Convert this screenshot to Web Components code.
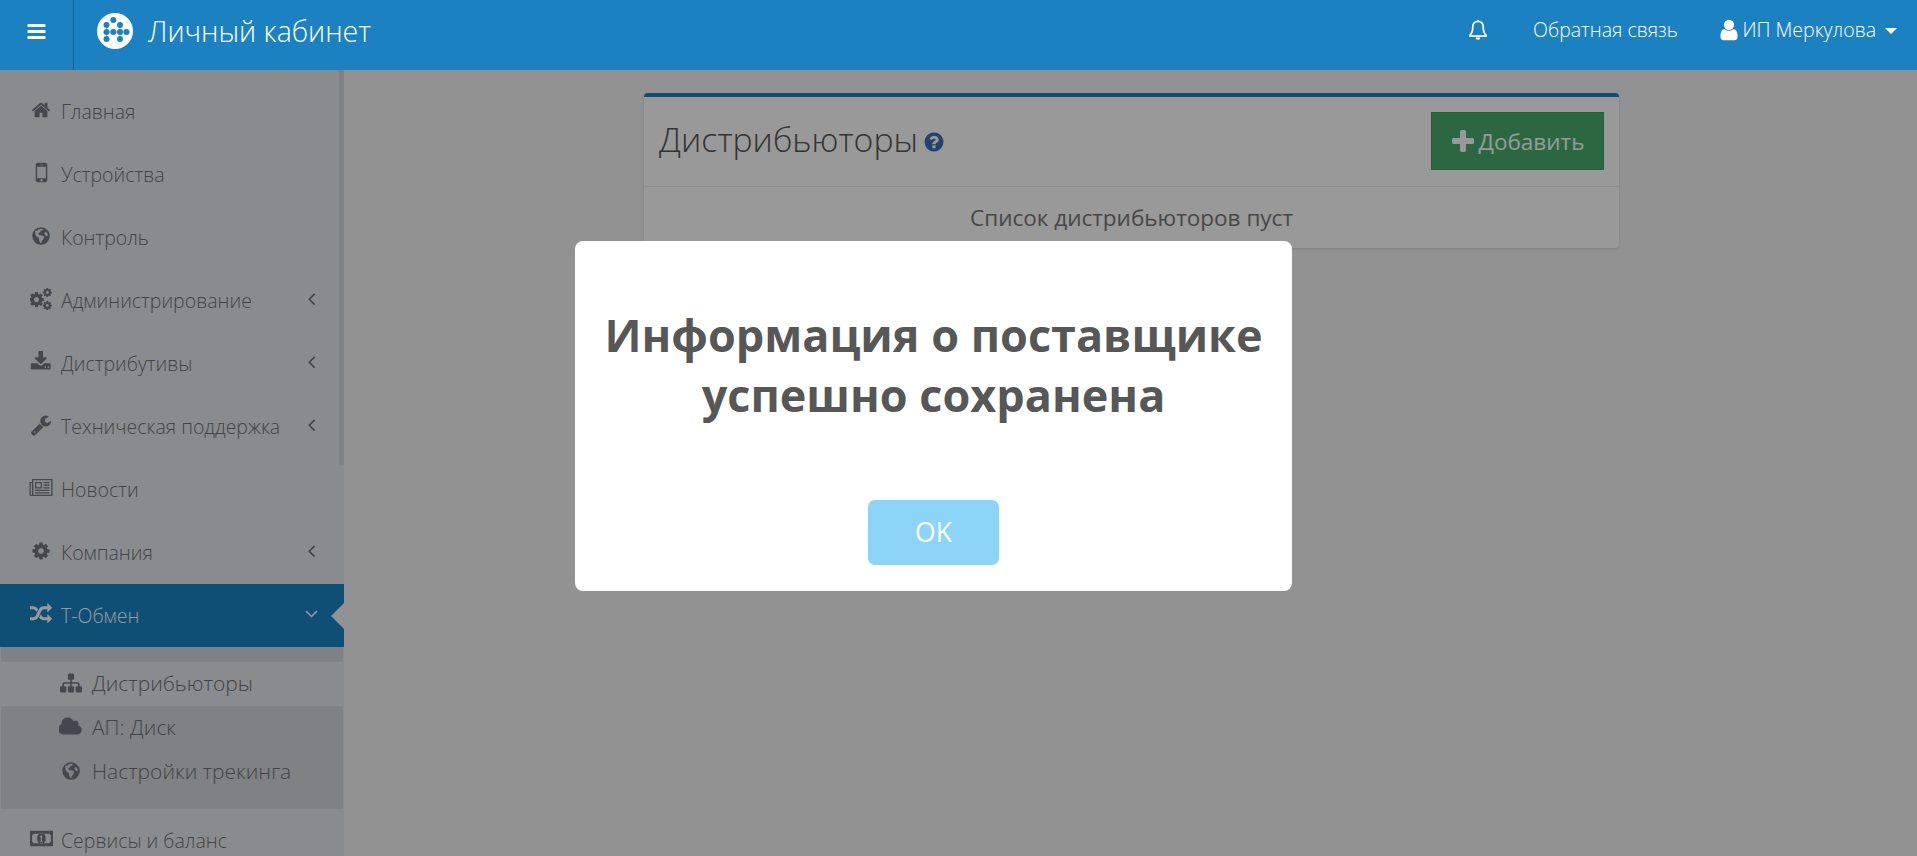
<!DOCTYPE html>
<html lang="ru">
<head>
<meta charset="utf-8">
<title>Личный кабинет</title>
<style>
  html, body { margin: 0; height: 100%; overflow: hidden; }
  body { font-family: "Open Sans", "Liberation Sans", sans-serif; background: #f3f3f4; }
</style>
</head>
<body>
<app-shell>
  <app-header slot="header"></app-header>
  <side-nav slot="nav">
    <nav-item icon="home" label="Главная"></nav-item>
    <nav-item icon="mobile" label="Устройства"></nav-item>
    <nav-item icon="globe" label="Контроль"></nav-item>
    <nav-item icon="cogs" label="Администрирование" arrow="left"></nav-item>
    <nav-item icon="download" label="Дистрибутивы" arrow="left"></nav-item>
    <nav-item icon="wrench" label="Техническая поддержка" arrow="left"></nav-item>
    <nav-item icon="news" label="Новости"></nav-item>
    <nav-item icon="cog" label="Компания" arrow="left"></nav-item>
    <nav-item icon="random" label="Т-Обмен" arrow="down" active></nav-item>
    <nav-group>
      <sub-item icon="sitemap" label="Дистрибьюторы" current></sub-item>
      <sub-item icon="cloud" label="АП: Диск"></sub-item>
      <sub-item icon="globe" label="Настройки трекинга"></sub-item>
    </nav-group>
    <nav-item icon="money" label="Сервисы и баланс"></nav-item>
  </side-nav>
  <dist-card slot="main" heading="Дистрибьюторы" empty="Список дистрибьюторов пуст"></dist-card>
  <alert-dialog slot="dialog" button="OK">Информация о поставщике успешно сохранена</alert-dialog>
</app-shell>

<script>
const ICONS = {
  bars: ['0 0 1792 1792', 'M1664 1344v128q0 26-19 45t-45 19h-1408q-26 0-45-19t-19-45v-128q0-26 19-45t45-19h1408q26 0 45 19t19 45zm0-512v128q0 26-19 45t-45 19h-1408q-26 0-45-19t-19-45v-128q0-26 19-45t45-19h1408q26 0 45 19t19 45zm0-512v128q0 26-19 45t-45 19h-1408q-26 0-45-19t-19-45v-128q0-26 19-45t45-19h1408q26 0 45 19t19 45z'],
  home: ['0 0 1792 1792', 'M1472 992v480q0 26-19 45t-45 19h-384v-384h-256v384h-384q-26 0-45-19t-19-45v-480q0-1 .5-3t.5-3l575-474 575 474q1 2 1 6zm223-69l-62 74q-8 9-21 11h-3q-13 0-21-7l-692-577-692 577q-12 8-24 7-13-2-21-11l-62-74q-8-10-7-23.5t11-21.5l719-599q32-26 76-26t76 26l244 204v-195q0-14 9-23t23-9h192q14 0 23 9t9 23v408l219 182q10 8 11 21.5t-7 23.5z'],
  mobile: ['0 0 1792 1792', 'M976 1408q0-33-23.5-56.5t-56.5-23.5-56.5 23.5-23.5 56.5 23.5 56.5 56.5 23.5 56.5-23.5 23.5-56.5zm208-160v-704q0-13-9.5-22.5t-22.5-9.5h-512q-13 0-22.5 9.5t-9.5 22.5v704q0 13 9.5 22.5t22.5 9.5h512q13 0 22.5-9.5t9.5-22.5zm-192-848q0-16-16-16h-160q-16 0-16 16t16 16h160q16 0 16-16zm288-16v1024q0 52-38 90t-90 38h-512q-52 0-90-38t-38-90v-1024q0-52 38-90t90-38h512q52 0 90 38t38 90z'],
  plus: ['0 0 1792 1792', 'M1600 736v192q0 40-28 68t-68 28h-416v416q0 40-28 68t-68 28h-192q-40 0-68-28t-28-68v-416h-416q-40 0-68-28t-28-68v-192q0-40 28-68t68-28h416v-416q0-40 28-68t68-28h192q40 0 68 28t28 68v416h416q40 0 68 28t28 68z'],
  question: ['0 0 1792 1792', 'M1024 1376v-192q0-14-9-23t-23-9h-192q-14 0-23 9t-9 23v192q0 14 9 23t23 9h192q14 0 23-9t9-23zm256-672q0-88-55.5-163t-138.5-116-170-41q-243 0-371 213-15 24 8 42l132 100q7 6 19 6 16 0 25-12 53-68 86-92 34-24 86-24 48 0 85.5 26t37.5 59q0 38-20 61t-68 45q-63 28-115.5 86.5t-52.5 125.5v36q0 14 9 23t23 9h192q14 0 23-9t9-23q0-19 21.5-49.5t54.5-49.5q32-18 49-28.5t46-35 44.5-48 28-60.5 12.5-81zm384 192q0 209-103 385.5t-279.5 279.5-385.5 103-385.5-103-279.5-279.5-103-385.5 103-385.5 279.5-279.5 385.5-103 385.5 103 279.5 279.5 103 385.5z'],
  user: ['0 0 1792 1792', 'M1536 1399q0 109-62.5 187t-150.5 78h-854q-88 0-150.5-78t-62.5-187q0-85 8.5-160.5t31.5-152 58.5-131 94-89 134.5-34.5q131 128 313 128t313-128q76 0 134.5 34.5t94 89 58.5 131 31.5 152 8.5 160.5zm-256-887q0 159-112.5 271.5t-271.5 112.5-271.5-112.5-112.5-271.5 112.5-271.5 271.5-112.5 271.5 112.5 112.5 271.5z'],
  left: ['0 0 1792 1792', 'M1203 544q0 13-10 23l-393 393 393 393q10 10 10 23t-10 23l-50 50q-10 10-23 10t-23-10l-466-466q-10-10-10-23t10-23l466-466q10-10 23-10t23 10l50 50q10 10 10 23z'],
  down: ['0 0 1792 1792', 'M1395 736q0 13-10 23l-466 466q-10 10-23 10t-23-10l-466-466q-10-10-10-23t10-23l50-50q10-10 23-10t23 10l393 393 393-393q10-10 23-10t23 10l50 50q10 10 10 23z'],
  cog: ['0 0 1792 1792', 'M1152 896q0-106-75-181t-181-75-181 75-75 181 75 181 181 75 181-75 75-181zm512-109v222q0 12-8 23t-20 13l-185 28q-19 54-39 91 35 50 107 138 10 12 10 25t-9 23q-27 37-99 108t-94 71q-12 0-26-9l-138-108q-44 23-91 38-16 136-29 186-7 28-36 28h-222q-14 0-24.5-8.5t-11.5-21.5l-28-184q-49-16-90-37l-141 107q-10 9-25 9-14 0-25-11-126-114-165-168-7-10-7-23 0-12 8-23 15-21 51-66.5t54-70.5q-27-50-41-99l-183-27q-13-2-21-12.5t-8-23.5v-222q0-12 8-23t19-13l186-28q14-46 39-92-40-57-107-138-10-12-10-24 0-10 9-23 26-36 98.5-107.5t94.5-71.5q13 0 26 10l138 107q44-23 91-38 16-136 29-186 7-28 36-28h222q14 0 24.5 8.5t11.5 21.5l28 184q49 16 90 37l142-107q9-9 24-9 13 0 25 10 129 119 165 170 7 8 7 22 0 12-8 23-15 21-51 66.5t-54 70.5q26 50 41 98l183 28q13 2 21 12.5t8 23.5z'],
  download: ['0 0 1792 1792', 'M1344 1344q0-26-19-45t-45-19-45 19-19 45 19 45 45 19 45-19 19-45zm256 0q0-26-19-45t-45-19-45 19-19 45 19 45 45 19 45-19 19-45zm128-224v320q0 40-28 68t-68 28h-1472q-40 0-68-28t-28-68v-320q0-40 28-68t68-28h465l135 136q58 56 136 56t136-56l136-136h464q40 0 68 28t28 68zm-325-569q17 41-14 70l-448 448q-18 19-45 19t-45-19l-448-448q-31-29-14-70 17-39 59-39h256v-448q0-26 19-45t45-19h256q26 0 45 19t19 45v448h256q42 0 59 39z'],
  wrench: ['0 0 1792 1792', 'M448 1472q0-26-19-45t-45-19-45 19-19 45 19 45 45 19 45-19 19-45zm644-420l-682 682q-37 37-90 37-52 0-91-37l-106-108q-38-36-38-90 0-53 38-91l681-681q39 98 114.5 173.5t173.5 114.5zm634-435q0 39-23 106-47 134-164.5 217.5t-258.5 83.5q-185 0-316.5-131.5t-131.5-316.5 131.5-316.5 316.5-131.5q58 0 121.5 16.5t107.5 46.5q16 11 16 28t-16 28l-293 169v224l193 107q5-3 79-48.5t135.5-81 70.5-35.5q15 0 23.5 10t8.5 25z'],
  random: ['0 0 1792 1792', 'M666 481q-60 92-137 273-22-45-37-72.5t-40.5-63.5-51-56.5-63-35-81.5-14.5h-224q-14 0-23-9t-9-23v-192q0-14 9-23t23-9h224q250 0 410 225zm1126 799q0 14-9 23l-320 320q-9 9-23 9-13 0-22.5-9.5t-9.5-22.5v-192q-32 0-85 .5t-81 1-73-1-71-5-64-10.5-63-18.5-58-28.5-59-40-55-53.5-56-69.5q59-93 136-273 22 45 37 72.5t40.5 63.5 51 56.5 63 35 81.5 14.5h256v-192q0-14 9-23t23-9q12 0 24 10l319 319q9 9 9 23zm0-896q0 14-9 23l-320 320q-9 9-23 9-13 0-22.5-9.5t-9.5-22.5v-192h-256q-48 0-87 15t-69 45-51 61.5-45 77.5q-32 62-78 171-29 66-49.5 111t-54 105-64 100-74 83-90 68.5-106.5 42-128 16.5h-224q-14 0-23-9t-9-23v-192q0-14 9-23t23-9h224q48 0 87-15t69-45 51-61.5 45-77.5q32-62 78-171 29-66 49.5-111t54-105 64-100 74-83 90-68.5 106.5-42 128-16.5h256v-192q0-14 9-23t23-9q12 0 24 10l319 319q9 9 9 23z'],
  sitemap: ['0 0 1792 1792', 'M1792 1248v320q0 40-28 68t-68 28h-320q-40 0-68-28t-28-68v-320q0-40 28-68t68-28h96v-192h-512v192h96q40 0 68 28t28 68v320q0 40-28 68t-68 28h-320q-40 0-68-28t-28-68v-320q0-40 28-68t68-28h96v-192h-512v192h96q40 0 68 28t28 68v320q0 40-28 68t-68 28h-320q-40 0-68-28t-28-68v-320q0-40 28-68t68-28h96v-192q0-52 38-90t90-38h512v-192h-96q-40 0-68-28t-28-68v-320q0-40 28-68t68-28h320q40 0 68 28t28 68v320q0 40-28 68t-68 28h-96v192h512q52 0 90 38t38 90v192h96q40 0 68 28t28 68z'],
  cloud: ['0 0 1920 1792', 'M1856 1152q0 159-112.5 271.5t-271.5 112.5h-1088q-185 0-316.5-131.5t-131.5-316.5q0-132 71-241.5t187-163.5q-2-28-2-43 0-212 150-362t362-150q158 0 286.5 88t187.5 230q70-62 166-62 106 0 181 75t75 181q0 75-41 138 129 30 213 134.5t84 239.5z']
};

// icons with no single path of their own
const DRAWN = {
  globe: `<svg viewBox="0 0 24 24"><path fill-rule="evenodd" d="M12 1.5a10.500 10.500 0 1 0 0 21 10.500 10.500 0 0 0 0-21zM5 5.800l2.600-.2 1.200-1.400 3-.8 2.400.6-.6 1.600-2.200.2-.4 1.600-1.800.6-.2 1.800 1.600 1.200 3 .4 2.200 1.600-.8 3-1.800 1.800-.6 2.200-1.400.2-1.400-3-.4-3-2.600-1.200-1.400-2.400zM17.500 7l1.600 1 1.200 3.200-1.200 1.200-2-1.400-1.200-2.200z"/></svg>`,
  cogs: `<svg viewBox="0 0 1792 1792"><use href="#c" transform="translate(-190 230) scale(.8)"/><use href="#c" transform="translate(980 -60) scale(.48)"/><use href="#c" transform="translate(980 1000) scale(.48)"/><defs><path id="c" d="${ICONS.cog[1]}"/></defs></svg>`,
  news: `<svg viewBox="0 0 24 20"><path fill-rule="evenodd" d="M3 1h20.500v17H2a1.500 1.500 0 0 1-1.500-1.500V4H3zM4.300 2.300V16a1 1 0 0 1-.3.700h18.200V2.300zM1.800 5.300v11.200a.300.300 0 0 0 .3.300.700.700 0 0 0 .9-.8V5.300zM6 4h7v6.500H6zm1.300 1.300v3.900h4.400V5.300zM14.500 4h6v1.300h-6zm0 2.600h6v1.300h-6zm0 2.600h6v1.300h-6zM6 11.700h14.500V13H6zm0 2.500h14.500v1.300H6z"/></svg>`,
  money: `<svg viewBox="0 0 24 24"><path fill-rule="evenodd" d="M0 4h24v16H0zM3.500 7a1.800 1.800 0 0 1-1.300 1.500v7A1.800 1.800 0 0 1 3.500 17h17a1.800 1.800 0 0 1 1.300-1.500v-7A1.800 1.800 0 0 1 20.500 7zM12 6.500c2.900 0 4.500 2.400 4.500 5.500s-1.600 5.500-4.500 5.500-4.500-2.400-4.500-5.500 1.600-5.500 4.500-5.500zm-1.800 3.300v1h1.100v3.700h-1.100v.9h3.400v-.9h-1.100V8.800h-1z"/></svg>`,
  bell: `<svg viewBox="0 0 20 22"><path fill="none" stroke="currentColor" stroke-width="1.700" stroke-linejoin="round" d="M10 2.500c-3.500 0-5.200 2.400-5.200 5.500 0 4-.9 6.300-2.800 8.200v1h16v-1c-1.900-1.900-2.800-4.200-2.800-8.200 0-3.100-1.700-5.500-5.200-5.500z"/><path d="M8.500 2.500a1.500 1.500 0 0 1 3 0zM7.700 18.500h4.600a2.300 2.300 0 0 1-4.600 0z"/></svg>`
};

// box size that gives each glyph its drawn width in the 22px icon column
const SIZES = { home: 20, mobile: 27, globe: 20, cogs: 22, download: 21.500, wrench: 22, news: 24, cog: 20, random: 22, money: 23, sitemap: 22, cloud: 23.500 };

class FaIcon extends HTMLElement {
  connectedCallback() {
    const name = this.getAttribute('name');
    const shadow = this.attachShadow({ mode: 'open' });
    let svg = DRAWN[name];
    if (!svg) {
      const [box, d] = ICONS[name];
      svg = `<svg viewBox="${box}"><path d="${d}"/></svg>`;
    }
    shadow.innerHTML = `
      <style>
        :host { display: inline-flex; align-items: center; justify-content: center; flex: none; }
        svg { display: block; width: 100%; height: 100%; fill: currentColor; }
      </style>${svg}`;
  }
}

class AppShell extends HTMLElement {
  constructor() {
    super();
    this.attachShadow({ mode: 'open' }).innerHTML = `
      <style>
        :host { display: flex; flex-direction: column; position: relative; width: 100%; height: 856px; overflow: hidden; }
        .head { position: relative; z-index: 3; }
        .body { display: flex; flex: 1; min-height: 0; }
        .nav { width: 344px; flex: none; overflow: hidden; }
        .main { flex: 1; padding: 23px 298px 0 300px; min-width: 0; }
        .veil { position: absolute; inset: 0; z-index: 2; background: rgba(0, 0, 0, .4); }
        .dlg { position: absolute; z-index: 2; left: 575px; top: 241px; }
      </style>
      <div class="head"><slot name="header"></slot></div>
      <div class="body">
        <div class="nav"><slot name="nav"></slot></div>
        <div class="main"><slot name="main"></slot></div>
      </div>
      <div class="veil"></div>
      <div class="dlg"><slot name="dialog"></slot></div>`;
  }
}

class AppHeader extends HTMLElement {
  constructor() {
    super();
    this.attachShadow({ mode: 'open' }).innerHTML = `
      <style>
        :host { display: flex; align-items: stretch; height: 70px; background: #1c81c1; color: #fff; font-weight: 300; }
        .toggle { width: 73px; flex: none; display: flex; align-items: center; justify-content: center; padding-bottom: 8px; box-sizing: content-box; height: 62px; border-right: 1px solid #1a5f8c; }
        .toggle fa-icon { width: 21px; height: 21px; }
        .brand { display: flex; align-items: center; gap: 15px; padding: 0 0 8px 23px; font-size: 28.500px; }
        .logo { width: 36px; height: 36px; flex: none; display: block; }
        .right { margin-left: auto; display: flex; align-items: center; font-size: 19.500px; padding-bottom: 11px; }
        .bell { width: 20px; height: 22px; margin-right: 45px; }
        .fb { margin-right: 39px; }
        .who { display: flex; align-items: center; margin-right: 20px; }
        .who fa-icon { width: 24px; height: 24px; margin-right: 1.500px; }
        .caret { width: 0; height: 0; margin-left: 9px; margin-top: 2px; border: 6px solid transparent; border-top-color: #fff; border-bottom: 0; }
      </style>
      <div class="toggle"><fa-icon name="bars"></fa-icon></div>
      <div class="brand">
        <svg class="logo" viewBox="0 0 36 36">
          <circle cx="18" cy="18" r="18" fill="#fff"/>
          <g fill="#1c81c1">
            <circle cx="16.300" cy="7" r="3"/><circle cx="9.500" cy="12" r="3"/><circle cx="23" cy="12" r="3"/>
            <circle cx="9.500" cy="19" r="3"/><circle cx="16.300" cy="19" r="3"/><circle cx="23" cy="19" r="3"/><circle cx="29.500" cy="19" r="3"/>
            <circle cx="9.500" cy="26" r="3"/><circle cx="23" cy="26" r="3"/>
          </g>
          <path d="M9.500 12v14M23 12v14M9.500 19h20" stroke="#1c81c1" stroke-width="1" fill="none" opacity=".6"/>
        </svg>
        <span>Личный кабинет</span>
      </div>
      <div class="right">
        <fa-icon class="bell" name="bell"></fa-icon>
        <span class="fb">Обратная связь</span>
        <span class="who"><fa-icon name="user"></fa-icon>ИП Меркулова<i class="caret"></i></span>
      </div>`;
  }
}

class SideNav extends HTMLElement {
  constructor() {
    super();
    this.attachShadow({ mode: 'open' }).innerHTML = `
      <style>
        :host { display: block; position: relative; height: 786px; box-sizing: border-box; padding-top: 10px; background: #e6e8ed; color: #6f7078; font-weight: 300; font-size: 19.500px; }
        .thumb { position: absolute; top: 0; right: 0; width: 5.500px; height: 395px; background: #d6d7db; border-radius: 0 0 3px 3px; }
      </style>
      <slot></slot>
      <div class="thumb"></div>`;
  }
}

class NavItem extends HTMLElement {
  connectedCallback() {
    const arrow = this.getAttribute('arrow');
    const active = this.hasAttribute('active');
    const icon = this.getAttribute('icon');
    const size = SIZES[icon];
    this.attachShadow({ mode: 'open' }).innerHTML = `
      <style>
        :host { display: flex; align-items: center; position: relative; height: 63px; padding-left: 30px; }
        :host([active]) { background: #1984c5; color: #fff; }
        .ic { width: ${size}px; height: ${size}px; margin: -4px ${(22 - size) / 2 + 9}px 0 ${(22 - size) / 2}px; color: #737683; }
        :host([active]) .ic { color: #fff; }
        .label { flex: 1; margin-top: -1px; white-space: nowrap; }
        .arr { width: 21px; height: 21px; margin-right: 22.500px; margin-top: -4px; }
        .notch { position: absolute; right: 0; top: 19px; width: 0; height: 0; border: 13px solid transparent; border-left: 0; border-right-color: #f3f3f4; }
      </style>
      <fa-icon class="ic" name="${icon}"></fa-icon>
      <span class="label">${this.getAttribute('label')}</span>
      ${arrow ? `<fa-icon class="arr" name="${arrow}"></fa-icon>` : ''}
      ${active ? '<i class="notch"></i>' : ''}`;
  }
}

class NavGroup extends HTMLElement {
  constructor() {
    super();
    this.attachShadow({ mode: 'open' }).innerHTML = `
      <style>
        :host { display: block; box-sizing: border-box; height: 162px; margin: 0 1px; padding: 15px 0; background: #d5d7dc; }
      </style>
      <slot></slot>`;
  }
}

class SubItem extends HTMLElement {
  connectedCallback() {
    const icon = this.getAttribute('icon');
    const size = SIZES[icon];
    this.attachShadow({ mode: 'open' }).innerHTML = `
      <style>
        :host { display: flex; align-items: center; height: 44px; padding-left: 59px; font-size: 21px; }
        :host([current]) { background: #e6e8ed; }
        .ic { width: ${size}px; height: ${size}px; margin: -2px ${(22 - size) / 2 + 10}px 0 ${(22 - size) / 2}px; color: #737683; }
        span { margin-top: -2px; white-space: nowrap; }
      </style>
      <fa-icon class="ic" name="${icon}"></fa-icon>
      <span>${this.getAttribute('label')}</span>`;
  }
}

class DistCard extends HTMLElement {
  connectedCallback() {
    this.attachShadow({ mode: 'open' }).innerHTML = `
      <style>
        :host { display: block; background: #fff; border-top: 4px solid #1c81c1; border-radius: 4px; box-shadow: 0 1px 3px rgba(0, 0, 0, .12); }
        .top { display: flex; align-items: center; justify-content: space-between; height: 90px; padding: 0 15px 2px; border-bottom: 1px solid #eee; box-sizing: border-box; }
        h2 { margin: -4px 0 0; display: flex; align-items: center; font-size: 33.800px; font-weight: 300; color: #555; }
        h2 fa-icon { width: 22px; height: 22px; margin-left: 5px; margin-top: 6px; color: #3b6fb5; }
        .add { display: flex; align-items: center; gap: 2px; box-sizing: border-box; width: 173px; height: 58px; padding-top: 2px; justify-content: center; background: #49ad6e; border: 1px solid #41a063; color: #fff; font-size: 22.500px; }
        .add fa-icon { width: 28px; height: 28px; margin-left: -2px; }
        .empty { text-align: center; font-size: 22.500px; font-weight: 400; color: #777; line-height: 62px; height: 61px; }
      </style>
      <div class="top">
        <h2>${this.getAttribute('heading')}<fa-icon name="question"></fa-icon></h2>
        <div class="add"><fa-icon name="plus"></fa-icon>Добавить</div>
      </div>
      <div class="empty">${this.getAttribute('empty')}</div>`;
  }
}

class AlertDialog extends HTMLElement {
  connectedCallback() {
    this.attachShadow({ mode: 'open' }).innerHTML = `
      <style>
        :host { display: block; box-sizing: border-box; width: 717px; height: 350px; background: #fff; border-radius: 8px; text-align: center; padding-top: 64px; }
        .msg { font-size: 45px; font-weight: 700; line-height: 60px; color: #575757; height: 195px; }
        button { display: block; margin: 0 auto; width: 131px; height: 65px; border: 0; border-radius: 7px; background: #8cd4f8; color: #fff; font: 400 26.500px "Open Sans", "Liberation Sans", sans-serif; padding: 0 0 2px; }
      </style>
      <div class="msg"><slot></slot></div>
      <button>${this.getAttribute('button')}</button>`;
  }
}

customElements.define('fa-icon', FaIcon);
customElements.define('app-shell', AppShell);
customElements.define('app-header', AppHeader);
customElements.define('side-nav', SideNav);
customElements.define('nav-item', NavItem);
customElements.define('nav-group', NavGroup);
customElements.define('sub-item', SubItem);
customElements.define('dist-card', DistCard);
customElements.define('alert-dialog', AlertDialog);
</script>
</body>
</html>
